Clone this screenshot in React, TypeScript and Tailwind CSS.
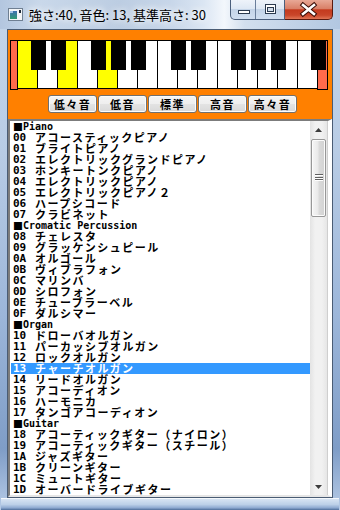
import React from "react";

type Row = { c?: string; n: string };

const rows: Row[] = [
  { n: "Piano" },
  { c: "00", n: "アコースティックピアノ" },
  { c: "01", n: "ブライトピアノ" },
  { c: "02", n: "エレクトリックグランドピアノ" },
  { c: "03", n: "ホンキートンクピアノ" },
  { c: "04", n: "エレクトリックピアノ" },
  { c: "05", n: "エレクトリックピアノ２" },
  { c: "06", n: "ハープシコード" },
  { c: "07", n: "クラビネット" },
  { n: "Cromatic Percussion" },
  { c: "08", n: "チェレスタ" },
  { c: "09", n: "グラッケンシュピール" },
  { c: "0A", n: "オルゴール" },
  { c: "0B", n: "ヴィブラフォン" },
  { c: "0C", n: "マリンバ" },
  { c: "0D", n: "シロフォン" },
  { c: "0E", n: "チューブラーベル" },
  { c: "0F", n: "ダルシマー" },
  { n: "Organ" },
  { c: "10", n: "ドローバオルガン" },
  { c: "11", n: "パーカッシブオルガン" },
  { c: "12", n: "ロックオルガン" },
  { c: "13", n: "チャーチオルガン" },
  { c: "14", n: "リードオルガン" },
  { c: "15", n: "アコーディオン" },
  { c: "16", n: "ハーモニカ" },
  { c: "17", n: "タンゴアコーディオン" },
  { n: "Guitar" },
  { c: "18", n: "アコーティックギター（ナイロン）" },
  { c: "19", n: "アコーティックギター（スチール）" },
  { c: "1A", n: "ジャズギター" },
  { c: "1B", n: "クリーンギター" },
  { c: "1C", n: "ミュートギター" },
  { c: "1D", n: "オーバードライブギター" },
];

const SELECTED = "13";

function Keyboard() {
  const whites = Array.from({ length: 15 }, (_, i) => i);
  const yellow = new Set([0, 2, 4]);
  const blacks = [21, 41, 81, 101, 121, 161, 181, 221, 241, 261, 301];
  return (
    <svg width="318" height="50" viewBox="0 0 318 50" shapeRendering="crispEdges" className="block">
      <rect x="0.5" y="0.5" width="7" height="48.5" fill="#ff6b4c" stroke="#000" />
      {whites.map((i) => (
        <rect
          key={i}
          x={7.5 + 20 * i}
          y={0.5}
          width={20}
          height={48}
          fill={yellow.has(i) ? "#ffff00" : "#ffffff"}
          stroke="#000"
        />
      ))}
      <rect x="307.5" y="0.5" width="10" height="48.5" fill="#ff6b4c" stroke="#000" />
      {blacks.map((x) => (
        <rect key={x} x={x} y={0} width={15} height={30} fill="#000" />
      ))}
    </svg>
  );
}

function TitleIcon() {
  return (
    <svg width="15" height="13" viewBox="0 0 15 13" shapeRendering="crispEdges">
      <defs>
        <linearGradient id="ig" x1="0" y1="0" x2="0" y2="1">
          <stop offset="0" stopColor="#3d6fb0" />
          <stop offset="1" stopColor="#2f9a70" />
        </linearGradient>
      </defs>
      <rect x="0.5" y="0.5" width="14" height="12" fill="#f3f5f7" stroke="#6f7f92" />
      <rect x="2" y="3" width="7" height="8" fill="url(#ig)" />
      <rect x="2" y="3" width="3" height="2" fill="#9fc2e6" />
      <rect x="11" y="2" width="2" height="3" fill="#1f2a36" />
    </svg>
  );
}

const btnCls =
  "w-[49px] h-[18px] flex items-center justify-center rounded-[3px] border border-[#707070] bg-[linear-gradient(180deg,#f5f5f5_0%,#eeeeee_50%,#e3e3e3_51%,#d9d9d9_100%)] shadow-[inset_0_0_0_1px_#fcfcfc] font-['Noto_Sans_CJK_JP',sans-serif] font-bold text-[11px] leading-[11px] tracking-[1.5px] text-black";

export default function App() {
  return (
    <div className="w-[340px] h-[510px] overflow-hidden flex flex-col bg-[linear-gradient(180deg,#c5d6ea_0%,#b8cce5_30%,#9cb6d9_62%,#7f9dc7_88%,#b6cbe6_100%)]">
      {/* Title bar */}
      <div className="h-[29px] flex shrink-0 bg-[linear-gradient(90deg,#b3c6df_0%,#c9d8ea_12%,#bccde2_35%,#c7d6e9_50%,#dbe6f3_60%,#f3f7fc_66%,#d2dfee_72%,#b2c7e1_100%)]">
        <div className="h-[29px] flex items-center pl-[8px] gap-[6px] flex-1">
          <TitleIcon />
          <span className="font-['Noto_Sans_CJK_JP',sans-serif] text-[13px] leading-[15px] text-black [text-shadow:0_0_6px_#ffffff,0_0_10px_#ffffff]">
            強さ:40, 音色: 13, 基準高さ: 30
          </span>
        </div>
        <div className="flex self-start mr-[7px]">
          <div className="flex h-[20px] rounded-bl-[5px] border border-t-0 border-[#4b5f7c] overflow-hidden bg-[linear-gradient(180deg,#eef3fa_0%,#dee8f4_45%,#c4d4e8_50%,#d0def0_100%)]">
            <div className="w-[25px] h-[19px] border-r border-[#6a7e9b]">
              <svg width="24" height="19" viewBox="0 0 24 19" shapeRendering="crispEdges">
                <rect x="7.5" y="10.5" width="11" height="3" fill="#ffffff" stroke="#2b3a4f" />
              </svg>
            </div>
            <div className="w-[28px] h-[19px]">
              <svg width="28" height="19" viewBox="0 0 28 19" shapeRendering="crispEdges">
                <rect x="9.5" y="4.5" width="10" height="9" fill="#ffffff" stroke="#2b3a4f" />
                <rect x="11.5" y="7.5" width="6" height="4" fill="#d3deec" stroke="#2b3a4f" />
              </svg>
            </div>
          </div>
          <div className="w-[48px] h-[20px] rounded-br-[5px] border border-l-0 border-t-0 border-[#5b1a0f] bg-[linear-gradient(180deg,#e8a896_0%,#d98068_45%,#c43a1e_52%,#c9462a_80%,#e07555_100%)]">
            <svg width="47" height="19" viewBox="0 0 47 19">
              <path d="M18 5 L29 14 M29 5 L18 14" stroke="#3a0d06" strokeWidth="4.6" strokeLinecap="square" />
              <path d="M18 5 L29 14 M29 5 L18 14" stroke="#ffffff" strokeWidth="2.6" strokeLinecap="square" />
            </svg>
          </div>
        </div>
      </div>

      {/* Client area */}
      <div className="mx-[7px] border border-[#4a5c74] flex flex-col shrink-0">
        <div className="h-[89px] bg-[#ff8000] flex flex-col pt-[10px]">
          <div className="ml-[2px]">
            <Keyboard />
          </div>
          <div className="ml-[40px] mt-[5px] flex gap-px">
            <div className={btnCls}>低々音</div>
            <div className={btnCls}>低音</div>
            <div className={btnCls}>標準</div>
            <div className={btnCls}>高音</div>
            <div className={btnCls}>高々音</div>
          </div>
        </div>

        <div className="h-[378px] flex bg-white border-t-2 border-l-2 border-t-[#7c7c7c] border-l-[#7c7c7c] border-b-2 border-b-[#e6e6e6] border-r-4 border-r-white">
          <div className="ml-px w-[299px] h-[374px] overflow-hidden">
            {rows.map((r, i) =>
              r.c ? (
                <div
                  key={i}
                  className={
                    "h-[11px] flex items-center pl-[2px] whitespace-nowrap " +
                    (r.c === SELECTED ? "bg-[#3399ff] text-white" : "text-black")
                  }
                >
                  <span className="w-[22px] shrink-0 font-['DejaVu_Sans_Mono',monospace] font-bold text-[11px] leading-[11px]">
                    {r.c}
                  </span>
                  <span className="font-['Noto_Sans_CJK_JP',sans-serif] font-bold text-[11px] leading-[11px] tracking-[1.5px]">
                    {r.n}
                  </span>
                </div>
              ) : (
                <div key={i} className="h-[11px] flex items-center pl-[2px] whitespace-nowrap text-black">
                  <span className="font-['Noto_Sans_CJK_JP',sans-serif] text-[10px] leading-[11px]">■</span>
                  <span className="font-['DejaVu_Sans_Mono',monospace] font-bold text-[10px] leading-[11px]">
                    {r.n}
                  </span>
                </div>
              )
            )}
          </div>
          <div className="w-[18px] h-[374px] flex flex-col border-r border-[#cfcfcf] bg-[linear-gradient(90deg,#e3e3e3_0%,#f1f1f1_30%,#f1f1f1_70%,#e6e6e6_100%)]">
            <div className="h-[17px] flex items-center justify-center">
              <svg width="7" height="4" viewBox="0 0 7 4">
                <path d="M0 4 L3.5 0 L7 4 Z" fill="#3c3c3c" />
              </svg>
            </div>
            <div className="mt-px mx-px h-[78px] rounded-[2px] border border-[#979797] bg-[linear-gradient(90deg,#f6f6f6_0%,#e9e9e9_45%,#dadada_55%,#d2d2d2_100%)] shadow-[inset_0_0_0_1px_#fbfbfb] flex items-center justify-center">
              <svg width="8" height="8" viewBox="0 0 8 8" shapeRendering="crispEdges">
                <rect x="0" y="0" width="8" height="1" fill="#616161" />
                <rect x="0" y="1" width="8" height="1" fill="#ffffff" />
                <rect x="0" y="2.5" width="8" height="1" fill="#616161" />
                <rect x="0" y="3.5" width="8" height="1" fill="#ffffff" />
                <rect x="0" y="5" width="8" height="1" fill="#616161" />
                <rect x="0" y="6" width="8" height="1" fill="#ffffff" />
              </svg>
            </div>
            <div className="flex-1" />
            <div className="h-[17px] flex items-center justify-center">
              <svg width="7" height="4" viewBox="0 0 7 4">
                <path d="M0 0 L7 0 L3.5 4 Z" fill="#3c3c3c" />
              </svg>
            </div>
          </div>
        </div>
      </div>

      {/* Bottom frame */}
      <div className="flex-1 mx-[1px] border-t border-[#f4f8fc] bg-[linear-gradient(180deg,#d7e4f3_0%,#bcd0e8_50%,#8eaad1_80%,#4d6d99_100%)]" />
    </div>
  );
}
